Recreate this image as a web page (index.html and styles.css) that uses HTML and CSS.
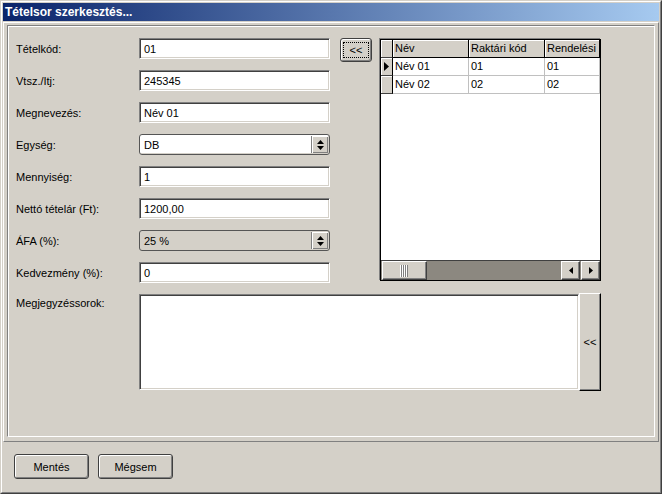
FILE: index.html
```html
<!DOCTYPE html>
<html lang="hu">
<head>
<meta charset="utf-8">
<title>Tételsor szerkesztés...</title>
<link rel="stylesheet" href="styles.css">
</head>
<body>
<div class="window">
  <div class="frame">
    <div class="titlebar">Tételsor szerkesztés...</div>
    <div class="panel-outer">
      <div class="panel">
        <div class="top">
          <div class="form">
            <div class="lbl">Tételkód:</div><div class="field">01</div>
            <div class="lbl">Vtsz./Itj:</div><div class="field">245345</div>
            <div class="lbl">Megnevezés:</div><div class="field">Név 01</div>
            <div class="lbl">Egység:</div>
            <div class="combo"><span class="combo-text">DB</span><span class="combo-btn"><svg width="7" height="10" viewBox="0 0 7 10"><polygon points="3.5,0 7,4 0,4" fill="#000"/><polygon points="0,6 7,6 3.5,10" fill="#000"/></svg></span></div>
            <div class="lbl">Mennyiség:</div><div class="field">1</div>
            <div class="lbl">Nettó tételár (Ft):</div><div class="field">1200,00</div>
            <div class="lbl">ÁFA (%):</div>
            <div class="combo combo-disabled"><span class="combo-text">25 %</span><span class="combo-btn"><svg width="7" height="10" viewBox="0 0 7 10"><polygon points="3.5,0 7,4 0,4" fill="#000"/><polygon points="0,6 7,6 3.5,10" fill="#000"/></svg></span></div>
            <div class="lbl">Kedvezmény (%):</div><div class="field">0</div>
          </div>
          <button class="btn btn-small" type="button"><span class="focus">&lt;&lt;</span></button>
          <div class="dbgrid">
            <div class="rows">
              <div class="ind"></div><div class="hc">Név</div><div class="hc">Raktári kód</div><div class="hc">Rendelési kód</div>
              <div class="ind"><svg width="5" height="9" viewBox="0 0 5 9"><polygon points="0,0 5,4.5 0,9" fill="#000"/></svg></div><div class="dc">Név 01</div><div class="dc">01</div><div class="dc">01</div>
              <div class="ind"></div><div class="dc">Név 02</div><div class="dc">02</div><div class="dc">02</div>
            </div>
            <div class="scroll">
              <div class="thumb"><svg width="9" height="12" viewBox="0 0 9 12"><g fill="#fff"><rect x="0" y="0" width="1" height="12"/><rect x="2" y="0" width="1" height="12"/><rect x="4" y="0" width="1" height="12"/><rect x="6" y="0" width="1" height="12"/></g><g fill="#808080"><rect x="1" y="0" width="1" height="12"/><rect x="3" y="0" width="1" height="12"/><rect x="5" y="0" width="1" height="12"/><rect x="7" y="0" width="1" height="12"/></g></svg></div>
              <div class="track"></div>
              <div class="sb-btn"><svg width="4" height="7" viewBox="0 0 4 7"><polygon points="4,0 4,7 0,3.5" fill="#000"/></svg></div>
              <div class="sb-btn sb-right"><svg width="4" height="7" viewBox="0 0 4 7"><polygon points="0,0 4,3.5 0,7" fill="#000"/></svg></div>
            </div>
          </div>
        </div>
        <div class="memo-row">
          <div class="memo-lbl">Megjegyzéssorok:</div>
          <div class="memo"></div>
          <button class="memo-btn" type="button">&lt;&lt;</button>
        </div>
      </div>
    </div>
    <div class="footer">
      <button class="btn btn-wide" type="button">Mentés</button>
      <button class="btn btn-wide" type="button">Mégsem</button>
    </div>
  </div>
</div>
</body>
</html>
```

FILE: styles.css
```css
* { box-sizing: border-box; }
html, body { margin: 0; padding: 0; }
body {
  width: 662px;
  height: 494px;
  overflow: hidden;
  background: #d4d0c8;
  font-family: "Liberation Sans", Arial, sans-serif;
  font-size: 11px;
  color: #000;
}
.window {
  width: 662px;
  height: 494px;
  border: 1px solid;
  border-color: #d4d0c8 #404040 #404040 #d4d0c8;
}
.frame {
  height: 100%;
  border: 1px solid;
  border-color: #fff #808080 #808080 #fff;
  padding: 1px;
  display: flex;
  flex-direction: column;
}
.titlebar {
  flex: none;
  height: 18px;
  line-height: 18px;
  padding-left: 2px;
  background: linear-gradient(to right, #0a246a, #a6caf0);
  color: #fff;
  font-weight: bold;
  font-size: 12px;
  white-space: nowrap;
}
.panel-outer {
  flex: none;
  height: 420px;
  margin-top: 1px;
  border: 1px solid;
  border-color: #fff #808080 #808080 #fff;
  padding: 2px 3px 4px 3px;
  display: flex;
}
.panel {
  flex: 1;
  border: 1px solid;
  border-color: #808080 #fff #fff #808080;
  box-shadow: inset 1px 1px 0 #fff;
  padding: 12px 0 0 8px;
}
.top {
  display: flex;
  align-items: flex-start;
}
.form {
  display: grid;
  grid-template-columns: 123px 191px;
  grid-auto-rows: 21px;
  row-gap: 11px;
}
.lbl {
  align-self: center;
  white-space: nowrap;
}
.field {
  background: #fff;
  border: 1px solid;
  border-color: #808080 #fff #fff #808080;
  box-shadow: inset 1px 1px 0 #404040, inset -1px -1px 0 #d4d0c8;
  padding-left: 4px;
  display: flex;
  align-items: center;
}
.combo {
  display: flex;
  background: #fff;
  border: 1px solid #555;
  border-radius: 3px;
  box-shadow: inset -1px -1px 0 #d4d0c8;
  overflow: hidden;
}
.combo-disabled { background: #d4d0c8; }
.combo-text {
  flex: 1;
  display: flex;
  align-items: center;
  padding-left: 4px;
}
.combo-btn {
  width: 17px;
  margin: 1px 1px 1px 0;
  background: #d4d0c8;
  border-left: 1px solid #808080;
  box-shadow: inset 1px 1px 0 #fff, inset -1px -1px 0 #808080;
  display: flex;
  align-items: center;
  justify-content: center;
}
.btn {
  font-family: "Liberation Sans", Arial, sans-serif;
  font-size: 11px;
  color: #000;
  background: #d4d0c8;
  border: 1px solid #404040;
  border-radius: 3px;
  box-shadow: inset 1px 1px 0 #fff, inset -1px -1px 0 #808080;
  padding: 0;
  display: flex;
  align-items: center;
  justify-content: center;
}
.btn-small {
  margin-left: 10px;
  width: 32px;
  height: 24px;
}
.focus {
  width: 26px;
  height: 16px;
  border: 1px dotted #000;
  display: flex;
  align-items: center;
  justify-content: center;
}
.dbgrid {
  margin-left: 8px;
  margin-top: 1px;
  width: 221px;
  height: 242px;
  border: 1px solid #000;
  box-shadow: -1px -1px 0 #808080;
  background: #fff;
  display: flex;
  flex-direction: column;
  overflow: hidden;
}
.rows {
  flex: 1;
  display: grid;
  grid-template-columns: 12px 76px 76px 1fr;
  grid-auto-rows: 18px;
  align-content: start;
}
.ind {
  background: #d4d0c8;
  border-right: 1px solid #000;
  border-bottom: 1px solid #404040;
  box-shadow: inset 1px 1px 0 #fff;
  display: flex;
  align-items: center;
  justify-content: center;
}
.hc {
  background: #d4d0c8;
  border-right: 1px solid #000;
  border-bottom: 1px solid #000;
  box-shadow: inset 1px 1px 0 #fff;
  padding-left: 2px;
  line-height: 17px;
  white-space: nowrap;
  overflow: hidden;
}
.dc {
  border-right: 1px solid #c0c0c0;
  border-bottom: 1px solid #c0c0c0;
  padding-left: 2px;
  line-height: 17px;
  white-space: nowrap;
  overflow: hidden;
}
.scroll {
  flex: none;
  height: 20px;
  border-top: 1px solid #404040;
  background: #8c8880;
  display: flex;
}
.thumb, .sb-btn {
  background: #d4d0c8;
  border: 1px solid;
  border-color: #fff #404040 #404040 #fff;
  box-shadow: inset -1px -1px 0 #808080;
  display: flex;
  align-items: center;
  justify-content: center;
}
.thumb {
  width: 45px;
  margin-left: 1px;
}
.track { flex: 1; }
.sb-btn { width: 19px; }
.sb-right { margin-left: 1px; }
.memo-row {
  display: flex;
  margin-top: 11px;
}
.memo-lbl {
  width: 123px;
  padding-top: 3px;
  white-space: nowrap;
}
.memo {
  width: 440px;
  height: 96px;
  background: #fff;
  border: 1px solid;
  border-color: #808080 #fff #fff #808080;
  box-shadow: inset 1px 1px 0 #404040, inset -1px -1px 0 #d4d0c8;
}
.memo-btn {
  width: 22px;
  height: 98px;
  margin-top: -1px;
  padding: 0;
  font-family: "Liberation Sans", Arial, sans-serif;
  font-size: 11px;
  color: #000;
  background: #d4d0c8;
  border: 1px solid;
  border-color: #fff #000 #000 #fff;
  box-shadow: inset -1px -1px 0 #808080;
}
.footer {
  flex: 1;
  display: flex;
  align-items: flex-start;
  gap: 9px;
  padding: 12px 0 0 11px;
}
.btn-wide {
  width: 75px;
  height: 25px;
}
```
